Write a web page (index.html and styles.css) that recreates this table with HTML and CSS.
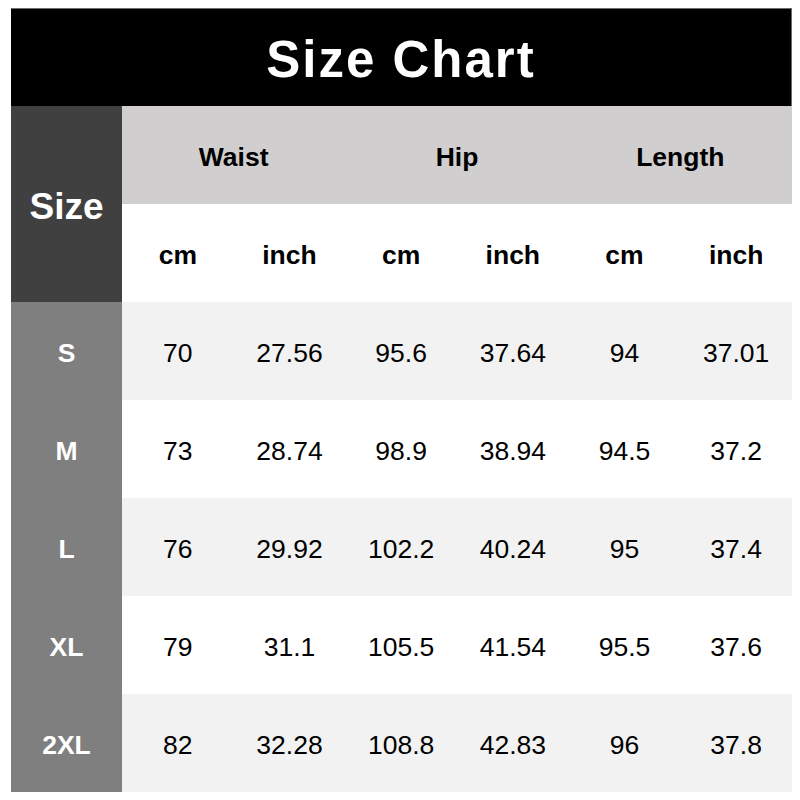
FILE: index.html
```html
<!DOCTYPE html>
<html>
<head>
<meta charset="utf-8">
<link rel="stylesheet" href="styles.css">
</head>
<body>
<div class="chart">
  <div class="title">Size Chart</div>
  <div class="size-head">Size</div>
  <div class="group">Waist</div>
  <div class="group">Hip</div>
  <div class="group">Length</div>
  <div class="unit">cm</div><div class="unit">inch</div>
  <div class="unit">cm</div><div class="unit">inch</div>
  <div class="unit">cm</div><div class="unit">inch</div>

  <div class="label">S</div>
  <div class="cell odd">70</div><div class="cell odd">27.56</div><div class="cell odd">95.6</div><div class="cell odd">37.64</div><div class="cell odd">94</div><div class="cell odd">37.01</div>
  <div class="label">M</div>
  <div class="cell">73</div><div class="cell">28.74</div><div class="cell">98.9</div><div class="cell">38.94</div><div class="cell">94.5</div><div class="cell">37.2</div>
  <div class="label">L</div>
  <div class="cell odd">76</div><div class="cell odd">29.92</div><div class="cell odd">102.2</div><div class="cell odd">40.24</div><div class="cell odd">95</div><div class="cell odd">37.4</div>
  <div class="label">XL</div>
  <div class="cell">79</div><div class="cell">31.1</div><div class="cell">105.5</div><div class="cell">41.54</div><div class="cell">95.5</div><div class="cell">37.6</div>
  <div class="label">2XL</div>
  <div class="cell odd">82</div><div class="cell odd">32.28</div><div class="cell odd">108.8</div><div class="cell odd">42.83</div><div class="cell odd">96</div><div class="cell odd">37.8</div>
</div>
</body>
</html>
```
FILE: styles.css
```css
html, body {
  margin: 0;
  padding: 0;
  background: #ffffff;
}
body {
  padding: 8px 0 0 11px;
  font-family: "Liberation Sans", Arial, sans-serif;
}
.chart {
  width: 781px;
  display: grid;
  grid-template-columns: 111px repeat(6, 1fr);
  grid-template-rows: repeat(8, 98px);
}
.chart > div {
  display: flex;
  align-items: center;
  justify-content: center;
  padding-top: 5px;
  box-sizing: border-box;
}
.chart > .title {
  grid-column: 1 / -1;
  padding-top: 3px;
  background: #000000;
  color: #ffffff;
  font-weight: bold;
  font-size: 51px;
  letter-spacing: 2px;
  border-top: 1px solid #6b6b6b;
  border-right: 1px solid #6b6b6b;
}
.size-head {
  grid-row: span 2;
  background: #404040;
  color: #ffffff;
  font-weight: bold;
  font-size: 37px;
}
.group {
  grid-column: span 2;
  background: #d0cece;
  color: #000000;
  font-weight: bold;
  font-size: 26.5px;
}
.unit {
  background: #ffffff;
  color: #000000;
  font-weight: bold;
  font-size: 26.5px;
}
.label {
  background: #7f7f7f;
  color: #ffffff;
  font-weight: bold;
  font-size: 26.5px;
}
.cell {
  background: #ffffff;
  color: #000000;
  font-size: 26.5px;
}
.cell.odd {
  background: #f2f2f2;
}
```
